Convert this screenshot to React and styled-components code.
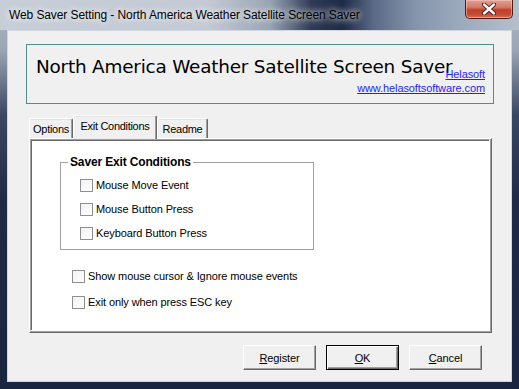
import React from "react";
import styled, { createGlobalStyle } from "styled-components";

const Global = createGlobalStyle`
  html, body { margin: 0; padding: 0; background: #1b2743; }
  body { font-family: "Liberation Sans", Arial, sans-serif; }
  #root { width: 519px; height: 389px; }
`;

const Window = styled.div`
  width: 519px;
  height: 389px;
  display: flex;
  flex-direction: column;
  overflow: hidden;
  background: linear-gradient(180deg, #b3bac4 0px, #9aa4b3 50px, #3a4764 115px, #1e2a47 200px, #1a2542 389px);
`;

const TitleBar = styled.div`
  height: 30px;
  flex: none;
  display: flex;
  align-items: flex-start;
  background: linear-gradient(90deg, #c7ced7 0%, #c3cad4 40%, #9aa5b5 52%, #2f3b56 60%, #1f2a45 66%, #5a6a86 72%, #8494ab 80%, #9aa8bb 88%, #b6c0cc 100%);
`;

const TitleText = styled.span`
  margin: 8px 0 0 9px;
  font-size: 12px;
  line-height: 15px;
  letter-spacing: -0.1px;
  color: #000;
  white-space: nowrap;
  text-shadow: 0 0 6px rgba(255, 255, 255, 0.95), 0 0 10px rgba(255, 255, 255, 0.7);
`;

const CloseButton = styled.div`
  margin: 0 6px 0 auto;
  width: 48px;
  height: 19px;
  box-sizing: border-box;
  border: 1px solid #4d1d16;
  border-top: none;
  border-radius: 0 0 5px 5px;
  background: linear-gradient(180deg, #e1a093 0%, #d27a69 40%, #c0402a 55%, #c44a33 80%, #d8705a 100%);
  box-shadow: inset 0 0 0 1px rgba(255, 210, 200, 0.5);
  display: flex;
  align-items: center;
  justify-content: center;
`;

const Frame = styled.div`
  flex: 1;
  display: flex;
  padding: 0 7px 7px 7px;
`;

const Client = styled.div`
  flex: 1;
  display: flex;
  flex-direction: column;
  border: 1px solid #cfd6df;
  background: #f0f0f0;
`;

const Header = styled.div`
  margin: 13px 0 0 18px;
  width: 468px;
  height: 60px;
  box-sizing: border-box;
  border: 1px solid #4f8d8a;
  display: flex;
  align-items: flex-start;
  padding: 10px 8px 0 9px;
`;

const HeaderTitle = styled.div`
  flex: 1;
  min-width: 0;
  font-family: "DejaVu Sans", sans-serif;
  font-size: 18.4px;
  line-height: 24px;
  letter-spacing: -0.2px;
  color: #000;
  white-space: nowrap;
`;

const Links = styled.div`
  flex: none;
  margin-top: 12px;
  display: flex;
  flex-direction: column;
  align-items: flex-end;
  font-size: 11px;
  line-height: 14px;
  letter-spacing: -0.1px;
`;

const Link = styled.a`
  color: #1f1fff;
  text-decoration: underline;
`;

const TabStrip = styled.div`
  margin: 11px 0 0 21px;
  height: 23px;
  display: flex;
  align-items: flex-end;
  position: relative;
  z-index: 1;
`;

const Tab = styled.div`
  box-sizing: border-box;
  width: ${(p) => p.$w}px;
  height: ${(p) => (p.$active ? 24 : 20)}px;
  margin-bottom: ${(p) => (p.$active ? -1 : 0)}px;
  border-top: 1px solid #fff;
  border-left: 1px solid #fff;
  border-right: 1px solid #696969;
  box-shadow: inset -1px 0 #a0a0a0, inset 0 1px #e3e3e3;
  border-radius: 2px 2px 0 0;
  background: #f0f0f0;
  font-size: 11px;
  letter-spacing: -0.3px;
  line-height: 14px;
  color: #000;
  text-align: center;
  padding-top: 3px;
  white-space: nowrap;
`;

const TabPanel = styled.div`
  margin-left: 21px;
  width: 463px;
  height: 195px;
  box-sizing: border-box;
  border: 1px solid;
  border-color: #fff #696969 #696969 #fff;
  box-shadow: inset -1px -1px #a0a0a0;
  padding: 0 1px 1px 0;
  display: flex;
`;

const Page = styled.div`
  flex: 1;
  border: 1px solid;
  border-color: #a0a0a0 #fff #fff #a0a0a0;
  box-shadow: inset 1px 1px #696969;
  background: #fff;
  display: flex;
  flex-direction: column;
  align-items: flex-start;
`;

const Group = styled.fieldset`
  margin: 15px 0 0 29px;
  width: 254px;
  box-sizing: border-box;
  border: 1px solid #a0a0a0;
  padding: 0 0 4px 0;
  min-width: 0;
`;

const Legend = styled.legend`
  margin-left: 7px;
  padding: 0 2px;
  font-size: 12px;
  font-weight: bold;
  line-height: 14px;
  letter-spacing: -0.15px;
  color: #000;
`;

const Options = styled.div`
  margin: ${(p) => p.$mt}px 0 0 ${(p) => p.$ml}px;
  display: flex;
  flex-direction: column;
`;

const Row = styled.label`
  height: ${(p) => p.$h}px;
  display: flex;
  align-items: center;
  gap: 3px;
  font-size: 11px;
  letter-spacing: -0.1px;
  color: #000;
  white-space: nowrap;
`;

const Box = styled.span`
  width: 13px;
  height: 13px;
  box-sizing: border-box;
  border: 1px solid #8e8f8f;
  background: linear-gradient(135deg, #f2f2f2, #ffffff);
  flex: none;
`;

const ButtonRow = styled.div`
  margin: 12px 29px 0 0;
  display: flex;
  justify-content: flex-end;
  gap: 10px;
`;

const Button = styled.div`
  width: 73px;
  height: 25px;
  box-sizing: border-box;
  border: 1px solid;
  border-color: ${(p) => (p.$default ? "#000" : "#fff #696969 #696969 #fff")};
  box-shadow: ${(p) =>
    p.$default
      ? "inset 1px 1px #fff, inset -1px -1px #696969, inset -2px -2px #a0a0a0"
      : "inset -1px -1px #a0a0a0"};
  background: #f0f0f0;
  display: flex;
  align-items: center;
  justify-content: center;
  font-size: 11px;
  letter-spacing: -0.1px;
  color: #000;
`;

const CloseX = () => (
  <svg width="14" height="12" viewBox="0 0 14 12">
    <path d="M2 1.5 L12 10.5 M12 1.5 L2 10.5" stroke="#3a1410" strokeWidth="4.2" strokeLinecap="round" />
    <path d="M2 1.5 L12 10.5 M12 1.5 L2 10.5" stroke="#ffffff" strokeWidth="2.4" strokeLinecap="round" />
  </svg>
);

export default function App() {
  return (
    <>
      <Global />
      <Window>
        <TitleBar>
          <TitleText>Web Saver Setting - North America Weather Satellite Screen Saver</TitleText>
          <CloseButton>
            <CloseX />
          </CloseButton>
        </TitleBar>
        <Frame>
          <Client>
            <Header>
              <HeaderTitle>North America Weather Satellite Screen Saver</HeaderTitle>
              <Links>
                <Link>Helasoft</Link>
                <Link>www.helasoftsoftware.com</Link>
              </Links>
            </Header>
            <TabStrip>
              <Tab $w={44}>Options</Tab>
              <Tab $w={84} $active>Exit Conditions</Tab>
              <Tab $w={51}>Readme</Tab>
            </TabStrip>
            <TabPanel>
              <Page>
                <Group>
                  <Legend>Saver Exit Conditions</Legend>
                  <Options $mt={4} $ml={19}>
                    <Row $h={24}><Box />Mouse Move Event</Row>
                    <Row $h={24}><Box />Mouse Button Press</Row>
                    <Row $h={24}><Box />Keyboard Button Press</Row>
                  </Options>
                </Group>
                <Options $mt={13} $ml={41}>
                  <Row $h={26}><Box />Show mouse cursor &amp; Ignore mouse events</Row>
                  <Row $h={26}><Box />Exit only when press ESC key</Row>
                </Options>
              </Page>
            </TabPanel>
            <ButtonRow>
              <Button><span><u>R</u>egister</span></Button>
              <Button $default><span><u>O</u>K</span></Button>
              <Button><span><u>C</u>ancel</span></Button>
            </ButtonRow>
          </Client>
        </Frame>
      </Window>
    </>
  );
}
